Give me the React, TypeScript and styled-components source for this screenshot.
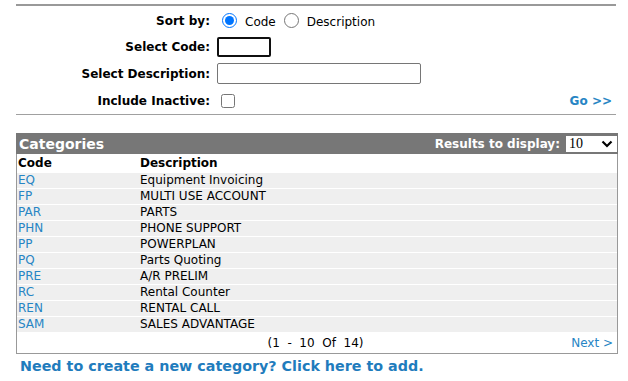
import React, { useState } from "react";
import styled, { createGlobalStyle } from "styled-components";

const GlobalStyle = createGlobalStyle`
  body {
    margin: 0;
    background: #fff;
    font-family: "DejaVu Sans", Verdana, sans-serif;
    font-size: 12px;
    color: #000;
  }
`;

interface ICategory {
  code: string
  description: string
}

const categories: ICategory[] = [
  { code: "EQ", description: "Equipment Invoicing" },
  { code: "FP", description: "MULTI USE ACCOUNT" },
  { code: "PAR", description: "PARTS" },
  { code: "PHN", description: "PHONE SUPPORT" },
  { code: "PP", description: "POWERPLAN" },
  { code: "PQ", description: "Parts Quoting" },
  { code: "PRE", description: "A/R PRELIM" },
  { code: "RC", description: "Rental Counter" },
  { code: "REN", description: "RENTAL CALL" },
  { code: "SAM", description: "SALES ADVANTAGE" },
];

const App = () => {
  const [sortBy, setSortBy] = useState("code")
  const [code, setCode] = useState("")
  const [description, setDescription] = useState("")
  const [inactive, setInactive] = useState(false)

  return (
    <Page>
      <GlobalStyle />
      <SearchForm>
        <Label>Sort by:</Label>
        <Field>
          <Radio checked={sortBy === "code"} onChange={() => setSortBy("code")} />
          <RadioText>Code</RadioText>
          <Radio checked={sortBy === "description"} onChange={() => setSortBy("description")} />
          <RadioText>Description</RadioText>
        </Field>
        <span />

        <Label>Select Code:</Label>
        <Field>
          <TextInput width={54} focused value={code} onChange={(e) => setCode(e.target.value)} />
        </Field>
        <span />

        <Label>Select Description:</Label>
        <Field>
          <TextInput width={204} value={description} onChange={(e) => setDescription(e.target.value)} />
        </Field>
        <span />

        <Label>Include Inactive:</Label>
        <Field>
          <CheckBox type="checkbox" checked={inactive} onChange={() => setInactive(!inactive)} />
        </Field>
        <GoLink href="#">Go &gt;&gt;</GoLink>
      </SearchForm>

      <Panel>
        <PanelHeader>
          <PanelTitle>Categories</PanelTitle>
          <ResultsPicker>
            Results to display:
            <SelectBox>
              <span>10</span>
              <svg width="12" height="8" viewBox="0 0 12 8">
                <path d="M1.5 1.5 L6 6 L10.5 1.5" fill="none" stroke="#000" strokeWidth="2.2" />
              </svg>
            </SelectBox>
          </ResultsPicker>
        </PanelHeader>
        <Table>
          <thead>
            <tr>
              <HeadCell>Code</HeadCell>
              <HeadCell>Description</HeadCell>
            </tr>
          </thead>
          <tbody>
            {categories.map((c) => (
              <Row key={c.code}>
                <CodeCell><CodeLink href="#">{c.code}</CodeLink></CodeCell>
                <Cell>{c.description}</Cell>
              </Row>
            ))}
          </tbody>
        </Table>
        <Pager>
          <span />
          <span>(1&nbsp; -&nbsp; 10&nbsp; Of&nbsp; 14)</span>
          <NextLink href="#">Next &gt;</NextLink>
        </Pager>
      </Panel>

      <AddLink href="#">Need to create a new category? Click here to add.</AddLink>
    </Page>
  )
}

const Page = styled.div`
  width: 602px;
  padding: 4px 0 0 16px;
`;

const SearchForm = styled.div`
  width: 600px;
  display: grid;
  grid-template-columns: 194px 1fr auto;
  grid-template-rows: 25px 27px 27px 27px;
  column-gap: 7px;
  align-items: center;
  padding: 2px 0 0;
  border-top: 2px solid #999;
  border-bottom: 1px solid #a0a0a0;
`;

const Label = styled.label`
  text-align: right;
  font-weight: bold;
  font-size: 12px;
`;

const Field = styled.div`
  display: flex;
  align-items: center;
`;

const Radio = styled.input.attrs({ type: "radio" })`
  width: 15px;
  height: 15px;
  margin: 0 8px 0 5px;
  accent-color: #0075ff;
`;

const RadioText = styled.span`
  margin-right: 3px;
  padding-top: 2px;
  font-size: 12px;
`;

const TextInput = styled.input.attrs({ type: "text" })<{ width: number; focused?: boolean }>`
  box-sizing: border-box;
  width: ${({ width }) => width}px;
  height: ${({ focused }) => focused ? 20 : 21}px;
  margin: 0;
  padding: 1px 3px;
  border: ${({ focused }) => focused ? "2px solid #101010" : "1px solid #767676"};
  border-radius: 2px;
  outline: none;
  font-family: inherit;
  font-size: 12px;
`;

const CheckBox = styled.input`
  width: 14px;
  height: 14px;
  margin: 0 0 0 4px;
`;

const GoLink = styled.a`
  padding-right: 4px;
  font-weight: bold;
  font-size: 12px;
  color: #2785c4;
  text-decoration: none;
`;

const Panel = styled.div`
  width: 600px;
  margin-top: 18px;
  border: 1px solid #999;
  border-top: none;
`;

const PanelHeader = styled.div`
  display: flex;
  align-items: center;
  justify-content: space-between;
  height: 21px;
  margin: 0 -1px;
  padding: 0 1px 0 3px;
  background: #777;
  color: #fff;
  font-weight: bold;
`;

const PanelTitle = styled.span`
  font-size: 14px;
`;

const ResultsPicker = styled.div`
  display: flex;
  align-items: center;
  gap: 6px;
  font-size: 12px;
`;

const SelectBox = styled.div`
  display: flex;
  align-items: center;
  justify-content: space-between;
  box-sizing: border-box;
  width: 51px;
  height: 16px;
  padding: 0 4px 0 3px;
  background: #fff;
  color: #000;
  font-family: "Liberation Serif", serif;
  font-weight: normal;
  font-size: 14px;
`;

const Table = styled.table`
  width: 100%;
  border-collapse: collapse;
`;

const HeadCell = styled.th`
  height: 18px;
  padding: 0 1px;
  text-align: left;
  font-size: 12px;
  &:first-child {
    width: 120px;
  }
`;

const Row = styled.tr`
  background: #efefef;
  border-top: 1px solid #fff;
`;

const Cell = styled.td`
  height: 15px;
  padding: 0 1px;
  font-size: 12px;
  line-height: 15px;
`;

const CodeCell = styled(Cell)`
  width: 120px;
`;

const CodeLink = styled.a`
  color: #2785c4;
  text-decoration: none;
`;

const Pager = styled.div`
  display: grid;
  grid-template-columns: 1fr auto 1fr;
  align-items: center;
  height: 21px;
  padding: 0 4px 0 1px;
  font-size: 12px;
`;

const NextLink = styled.a`
  justify-self: end;
  color: #2785c4;
  text-decoration: none;
`;

const AddLink = styled.a`
  display: block;
  margin: 4px 0 0 4px;
  font-weight: bold;
  font-size: 14.3px;
  color: #1f7cbd;
  text-decoration: none;
`;

export default App
